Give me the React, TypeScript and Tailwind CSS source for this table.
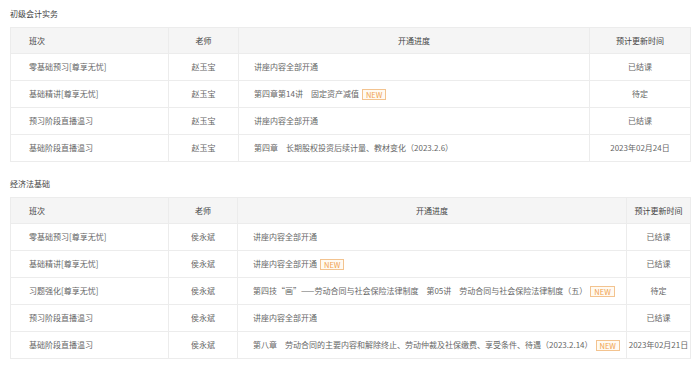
import React from "react";

type Row = { cls: string; teacher: string; progress: string; isNew?: boolean; time: string };

const accounting: Row[] = [
  { cls: "零基础预习[尊享无忧]", teacher: "赵玉宝", progress: "讲座内容全部开通", time: "已结课" },
  { cls: "基础精讲[尊享无忧]", teacher: "赵玉宝", progress: "第四章第14讲　固定资产减值", isNew: true, time: "待定" },
  { cls: "预习阶段直播温习", teacher: "赵玉宝", progress: "讲座内容全部开通", time: "已结课" },
  { cls: "基础阶段直播温习", teacher: "赵玉宝", progress: "第四章　长期股权投资后续计量、教材变化（2023.2.6）", time: "2023年02月24日" },
];

const law: Row[] = [
  { cls: "零基础预习[尊享无忧]", teacher: "侯永斌", progress: "讲座内容全部开通", time: "已结课" },
  { cls: "基础精讲[尊享无忧]", teacher: "侯永斌", progress: "讲座内容全部开通", isNew: true, time: "已结课" },
  { cls: "习题强化[尊享无忧]", teacher: "侯永斌", progress: "第四技“画”——劳动合同与社会保险法律制度　第05讲　劳动合同与社会保险法律制度（五）", isNew: true, time: "待定" },
  { cls: "预习阶段直播温习", teacher: "侯永斌", progress: "讲座内容全部开通", time: "已结课" },
  { cls: "基础阶段直播温习", teacher: "侯永斌", progress: "第八章　劳动合同的主要内容和解除终止、劳动仲裁及社保缴费、享受条件、待遇（2023.2.14）", isNew: true, time: "2023年02月21日" },
];

function NewTag() {
  return (
    <span className="ml-[3px] inline-block h-[11px] px-[3px] border border-[#f3c38f] bg-[#fffaf2] text-[#f0a24f] text-[7.5px] leading-[9px] align-middle">
      NEW
    </span>
  );
}

function Section({ title, rows, widths }: { title: string; rows: Row[]; widths: number[] }) {
  return (
    <div>
      <div className="h-[19px] leading-[19px] text-[8px] text-[#444] mb-[4px]">{title}</div>
      <table className="w-[680px] table-fixed border-collapse border border-[#ececec] text-[8px] text-[#666]">
        <colgroup>
          {widths.map((w, i) => (
            <col key={i} style={{ width: w }} />
          ))}
        </colgroup>
        <thead>
          <tr className="h-[26px] bg-[#f5f5f5] text-[#444]">
            <th className="font-normal text-left pl-[18px] border border-[#ececec]">班次</th>
            <th className="font-normal text-center border border-[#ececec]">老师</th>
            <th className="font-normal text-center border border-[#ececec]">开通进度</th>
            <th className="font-normal text-center border border-[#ececec] whitespace-nowrap">预计更新时间</th>
          </tr>
        </thead>
        <tbody>
          {rows.map((r, i) => (
            <tr key={i} className="h-[27px]">
              <td className="pl-[18px] border border-[#ececec] whitespace-nowrap">{r.cls}</td>
              <td className="text-center border border-[#ececec]">{r.teacher}</td>
              <td className="pl-[15px] border border-[#ececec] whitespace-nowrap">
                {r.progress}
                {r.isNew && <NewTag />}
              </td>
              <td className="text-center border border-[#ececec] whitespace-nowrap">{r.time}</td>
            </tr>
          ))}
        </tbody>
      </table>
    </div>
  );
}

export default function App() {
  return (
    <div
      className="w-[700px] h-[365px] bg-white px-[10px] pt-[4px] overflow-hidden"
      style={{ fontFamily: '"Noto Sans CJK SC", "Noto Sans", sans-serif' }}
    >
      <Section title="初级会计实务" rows={accounting} widths={[158, 70, 351, 101]} />
      <div className="mt-[12px]">
        <Section title="经济法基础" rows={law} widths={[158, 69, 389, 64]} />
      </div>
    </div>
  );
}
